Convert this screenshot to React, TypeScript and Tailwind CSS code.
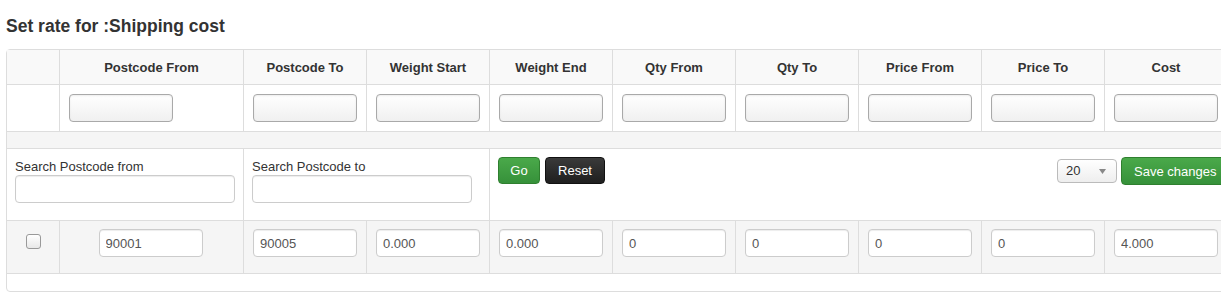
import React from "react";

const headers = [
  "Postcode From",
  "Postcode To",
  "Weight Start",
  "Weight End",
  "Qty From",
  "Qty To",
  "Price From",
  "Price To",
  "Cost",
];

const rowValues = ["90005", "0.000", "0.000", "0", "0", "0", "0", "4.000"];

const cell = "border-l border-t border-[#ddd]";

function FilterInput() {
  return (
    <input
      type="text"
      className="block h-[28px] w-[104px] rounded-[4px] border border-[#a9a9a9] bg-gradient-to-b from-white to-[#f0f0f0] shadow-[inset_0_1px_2px_rgba(0,0,0,0.08)] outline-none"
    />
  );
}

function ValueInput({ value, center }: { value: string; center?: boolean }) {
  return (
    <input
      type="text"
      defaultValue={value}
      className={
        "block h-[28px] w-[104px] rounded-[4px] border border-[#ccc] bg-white px-[6px] text-[13px] text-[#555] shadow-[inset_0_1px_1px_rgba(0,0,0,0.075)] outline-none" +
        (center ? " mx-auto" : "")
      }
    />
  );
}

export default function App() {
  return (
    <div className="w-[1221px] overflow-hidden bg-white pl-[6px] font-['Liberation_Sans',Arial,sans-serif] text-[13px] text-[#333]">
      <h4 className="mt-[16px] mb-[13px] text-[17.5px] font-bold leading-[20px] text-[#333]">
        Set rate for :Shipping cost
      </h4>

      <table className="w-[1222px] table-fixed border-separate border-spacing-0 rounded-[4px] border border-[#ddd]">
        <colgroup>
          <col className="w-[52px]" />
          <col className="w-[184px]" />
          {headers.slice(1).map((h) => (
            <col key={h} className="w-[123px]" />
          ))}
        </colgroup>
        <thead>
          <tr className="h-[34px] bg-[#f9f9f9]">
            <th className=""></th>
            {headers.map((h) => (
              <th key={h} className="border-l border-[#ddd] pt-[2px] text-center align-middle text-[13px] font-bold">
                {h}
              </th>
            ))}
          </tr>
        </thead>
        <tbody>
          <tr className="h-[47px]">
            <td className="border-t border-[#ddd]"></td>
            {headers.map((h) => (
              <td key={h} className={cell + " px-[9px] align-middle"}>
                <FilterInput />
              </td>
            ))}
          </tr>
          <tr className="h-[17px] bg-[#f5f5f5]">
            <td colSpan={10} className="border-t border-[#ddd]"></td>
          </tr>
          <tr className="h-[72px]">
            <td colSpan={2} className="border-t border-[#ddd] p-[8px] align-top">
              <label className="block pt-[1px] leading-[17px]">Search Postcode from</label>
              <input
                type="text"
                className="block h-[28px] w-[220px] rounded-[4px] border border-[#ccc] bg-white shadow-[inset_0_1px_1px_rgba(0,0,0,0.075)] outline-none"
              />
            </td>
            <td colSpan={2} className={cell + " p-[8px] align-top"}>
              <label className="block pt-[1px] leading-[17px]">Search Postcode to</label>
              <input
                type="text"
                className="block h-[28px] w-[220px] rounded-[4px] border border-[#ccc] bg-white shadow-[inset_0_1px_1px_rgba(0,0,0,0.075)] outline-none"
              />
            </td>
            <td colSpan={6} className={cell + " py-[8px] pl-[8px] pr-0 align-top"}>
              <div className="flex items-start">
                <button className="h-[27px] w-[42px] rounded-[4px] border border-[#2f7f2f] bg-gradient-to-b from-[#4aa94a] to-[#36913a] pt-[1px] text-[13px] text-white">
                  Go
                </button>
                <button className="ml-[5px] h-[27px] w-[60px] rounded-[4px] border border-[#111] bg-gradient-to-b from-[#3a3a3a] to-[#1f1f1f] pt-[1px] text-[13px] text-white">
                  Reset
                </button>
                <div className="-mr-[2px] ml-auto flex items-start">
                  <div className="mt-[2px] flex h-[24px] w-[60px] items-center justify-between rounded-[4px] border border-[#bbb] bg-gradient-to-b from-white to-[#eee] pl-[8px] pr-[10px] text-[13px] text-[#333]">
                    <span>20</span>
                    <svg width="7" height="5" viewBox="0 0 7 5">
                      <path d="M0 0 L7 0 L3.5 5 Z" fill="#888" />
                    </svg>
                  </div>
                  <button className="ml-[4px] h-[28px] w-[108px] whitespace-nowrap rounded-[4px] border border-[#2f7f2f] bg-gradient-to-b from-[#4aa94a] to-[#36913a] pl-[12px] pt-[1px] text-left text-[13px] text-white">
                    Save changes
                  </button>
                </div>
              </div>
            </td>
          </tr>
          <tr className="h-[53px] bg-[#f5f5f5]">
            <td className="border-t border-[#ddd] pt-[13px] align-top">
              <div className="mx-auto h-[15px] w-[15px] rounded-[3px] border border-[#999] bg-gradient-to-b from-white to-[#e8e8e8]" />
            </td>
            <td className={cell + " pl-[8px] pr-[10px] pt-[8px] align-top"}>
              <ValueInput value="90001" center />
            </td>
            {rowValues.map((v, i) => (
              <td key={i} className={cell + " px-[9px] pt-[8px] align-top"}>
                <ValueInput value={v} />
              </td>
            ))}
          </tr>
          <tr className="h-[18px]">
            <td colSpan={10} className="border-t border-[#ddd]"></td>
          </tr>
        </tbody>
      </table>
    </div>
  );
}
